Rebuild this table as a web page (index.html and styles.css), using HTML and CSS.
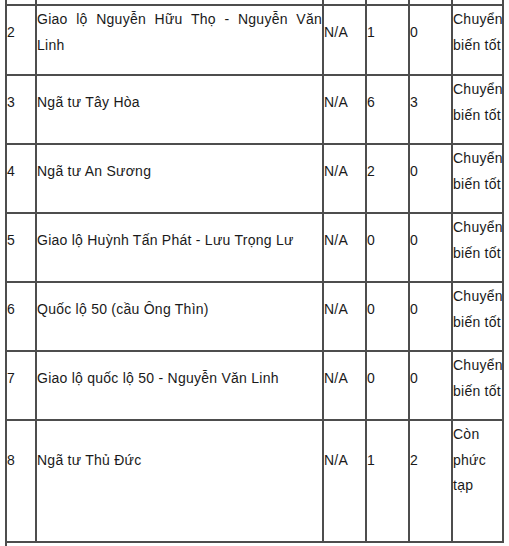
FILE: index.html
```html
<!DOCTYPE html>
<html lang="vi">
<head>
<meta charset="utf-8">
<title>Bảng giao lộ</title>
<link rel="stylesheet" href="styles.css">
</head>
<body>
<div class="page">
  <table class="grid">
    <tr class="filler">
      <td class="c1"></td><td class="c2"></td><td class="c3"></td><td class="c4"></td><td class="c5"></td><td class="c6"></td>
    </tr>
    <tr class="row first">
      <td class="c1">2</td>
      <td class="c2 name">Giao lộ Nguyễn Hữu Thọ - Nguyễn Văn Linh</td>
      <td class="c3">N/A</td>
      <td class="c4">1</td>
      <td class="c5">0</td>
      <td class="c6">Chuyển biến tốt</td>
    </tr>
    <tr class="row">
      <td class="c1">3</td>
      <td class="c2 name">Ngã tư Tây Hòa</td>
      <td class="c3">N/A</td>
      <td class="c4">6</td>
      <td class="c5">3</td>
      <td class="c6">Chuyển biến tốt</td>
    </tr>
    <tr class="row">
      <td class="c1">4</td>
      <td class="c2 name">Ngã tư An Sương</td>
      <td class="c3">N/A</td>
      <td class="c4">2</td>
      <td class="c5">0</td>
      <td class="c6">Chuyển biến tốt</td>
    </tr>
    <tr class="row">
      <td class="c1">5</td>
      <td class="c2 name">Giao lộ Huỳnh Tấn Phát - Lưu Trọng Lư</td>
      <td class="c3">N/A</td>
      <td class="c4">0</td>
      <td class="c5">0</td>
      <td class="c6">Chuyển biến tốt</td>
    </tr>
    <tr class="row">
      <td class="c1">6</td>
      <td class="c2 name">Quốc lộ 50 (cầu Ông Thìn)</td>
      <td class="c3">N/A</td>
      <td class="c4">0</td>
      <td class="c5">0</td>
      <td class="c6">Chuyển biến tốt</td>
    </tr>
    <tr class="row">
      <td class="c1">7</td>
      <td class="c2 name">Giao lộ quốc lộ 50 - Nguyễn Văn Linh</td>
      <td class="c3">N/A</td>
      <td class="c4">0</td>
      <td class="c5">0</td>
      <td class="c6">Chuyển biến tốt</td>
    </tr>
    <tr class="row last">
      <td class="c1">8</td>
      <td class="c2 name">Ngã tư Thủ Đức</td>
      <td class="c3">N/A</td>
      <td class="c4">1</td>
      <td class="c5">2</td>
      <td class="c6">Còn phức tạp</td>
    </tr>
    <tr class="tail">
      <td class="c1" colspan="6"></td>
    </tr>
  </table>
</div>
</body>
</html>
```
FILE: styles.css
```css
html, body {
  margin: 0;
  padding: 0;
  background: #ffffff;
}

.page {
  height: 546px;
  overflow: hidden;
  padding-left: 5px;
  font-family: "Liberation Sans", Arial, sans-serif;
  font-size: 14px;
  letter-spacing: 0.25px;
  color: #1a1a1a;
}

.grid {
  border-collapse: separate;
  border-spacing: 0;
  table-layout: fixed;
  width: 499px;
}

.grid td {
  box-sizing: border-box;
  border-right: 2px solid #4d4d4d;
  border-bottom: 2px solid #4d4d4d;
  padding: 0;
  vertical-align: middle;
  line-height: 25.5px;
  text-align: left;
}

.grid td.c1 {
  border-left: 2px solid #4d4d4d;
}

.c1 { width: 32px; }
.c2 { width: 287px; }
.c3 { width: 43px; }
.c4 { width: 43px; }
.c5 { width: 43px; }
.c6 { width: 51px; }

.grid td.name {
  text-align: justify;
}

.filler td {
  height: 6px;
  line-height: 0;
  font-size: 0;
}

.row td {
  padding-top: 1px;
  padding-bottom: 15px;
}

.row.first td {
  padding-bottom: 16px;
}

.row.last td {
  padding-bottom: 42px;
}

.grid .tail td {
  border-right: none;
  border-bottom: none;
  height: 20px;
}
```
